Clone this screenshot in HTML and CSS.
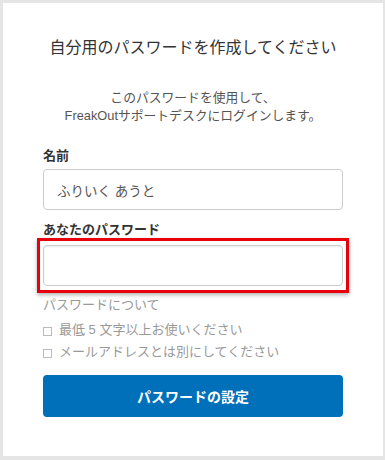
FILE: index.html
```html
<!DOCTYPE html>
<html lang="ja">
<head>
  <meta charset="UTF-8" />
  <meta name="viewport" content="width=device-width, initial-scale=1.0"/>
  <title>パスワードの設定</title>
  <link rel="stylesheet" href="styles.css">
</head>
<body>
  <div class="card">
    <h1>自分用のパスワードを作成してください</h1>
    <p class="lead">このパスワードを使用して、<br>FreakOutサポートデスクにログインします。</p>

    <label class="field-label" for="name">名前</label>
    <input class="field" type="text" id="name" value="ふりいく あうと"/>

    <label class="field-label second" for="password">あなたのパスワード</label>
    <div class="highlight">
      <input class="field pw" type="password" id="password"/>
    </div>

    <p class="hint-title">パスワードについて</p>
    <ul class="hints">
      <li><span class="box"></span>最低 5 文字以上お使いください</li>
      <li><span class="box"></span>メールアドレスとは別にしてください</li>
    </ul>

    <button class="submit">パスワードの設定</button>
  </div>
</body>
</html>
```

FILE: styles.css
```css
body {
  margin: 0;
  padding: 3px 2px 0 3px;
  background-color: #e5e5e5;
  font-family: "Liberation Sans", "Noto Sans CJK JP", sans-serif;
  color: #333;
}
.card {
  background: #fff;
  height: 420px;
  padding: 33px 40px 0 40px;
}
h1 {
  margin: 0;
  font-size: 16px;
  line-height: 24px;
  font-weight: normal;
  text-align: center;
  color: #333;
}
.lead {
  margin: 29px 0 0 0;
  font-size: 12.8px;
  line-height: 18px;
  text-align: center;
  color: #555;
}
.field-label {
  display: block;
  margin-top: 22px;
  font-size: 13px;
  line-height: 18px;
  font-weight: bold;
  color: #333;
}
.field-label.second { margin-top: 11px; }
.field {
  display: block;
  box-sizing: border-box;
  width: 100%;
  height: 41px;
  margin-top: 4px;
  padding: 0 13px;
  border: 1px solid #ccc;
  border-radius: 4px;
  font-family: inherit;
  font-size: 13.5px;
  color: #555;
  background: #fff;
}
.field.pw {
  margin-top: 0;
  box-shadow: inset 0 1px 2px rgba(0,0,0,0.08);
}
.highlight {
  margin: -1px -6px 0 -6px;
  padding: 4px 3px;
  border: 3px solid #e8000b;
  box-shadow: 0 2px 4px rgba(0,0,0,0.3);
}
.hint-title {
  margin: 3px 0 0 0;
  font-size: 13px;
  line-height: 18px;
  color: #999;
}
.hints {
  list-style: none;
  margin: 5px 0 0 0;
  padding: 0;
  font-size: 13px;
  line-height: 22px;
  color: #999;
}
.hints li { display: flex; align-items: center; gap: 7px; }
.box {
  display: inline-block;
  box-sizing: border-box;
  width: 9px;
  height: 9px;
  margin-top: 2px;
  border: 1.5px solid #bbb;
}
.submit {
  display: block;
  width: 100%;
  height: 42px;
  margin-top: 12px;
  border: none;
  border-radius: 4px;
  background-color: #0070ba;
  color: #fff;
  font-family: inherit;
  font-size: 14px;
  font-weight: bold;
  cursor: pointer;
}
```
